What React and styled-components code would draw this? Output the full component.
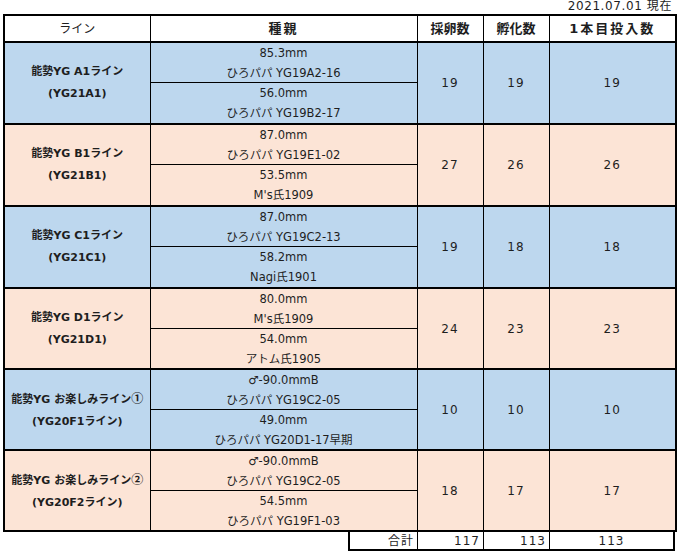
import React from "react";
import styled, { createGlobalStyle } from "styled-components";

const GlobalStyle = createGlobalStyle`
  body {
    margin: 0;
    background: #fff;
  }
`;

const tones = {
  blue: "#bdd7ee",
  peach: "#fce4d6",
};

const Page = styled.div`
  width: 672px;
  padding-left: 3px;
  font-family: "DejaVu Sans", "Noto Sans CJK JP", sans-serif;
  color: #1e1e1e;
`;

const DateLine = styled.div`
  height: 14px;
  line-height: 13px;
  font-size: 12px;
  letter-spacing: 0.6px;
  text-align: right;
  padding-right: 3px;
  box-sizing: border-box;
`;

const Table = styled.table`
  width: 672px;
  border-collapse: collapse;
  table-layout: fixed;
  border: 2px solid #000;
`;

const HeadCell = styled.th`
  height: 25px;
  padding: 0;
  border: 1px solid #000;
  border-bottom: 2px solid #000;
  background: #fff;
  font-size: ${(p) => (p.$bold ? "13px" : "12px")};
  font-weight: ${(p) => (p.$bold ? 700 : 400)};
  line-height: 16px;
  letter-spacing: ${(p) => p.$spacing || "0"};
  text-align: center;
`;

const GroupRow = styled.tr`
  border-top: ${(p) => (p.$start ? "2px solid #000" : "none")};
`;

const NameCell = styled.td`
  padding: 0;
  border-right: 1px solid #000;
  background: ${(p) => tones[p.$tone]};
  font-size: 11px;
  font-weight: 700;
  line-height: 22px;
  text-align: center;
`;

const Circled = styled.span`
  font-family: "Noto Sans CJK JP", sans-serif;
  font-size: 12px;
  font-weight: 700;
`;

const ParentCell = styled.td`
  height: ${(p) => p.$h}px;
  padding: 0;
  background: ${(p) => tones[p.$tone]};
  border-bottom: ${(p) => (p.$split ? "1px solid #000" : "none")};
  font-size: 11.5px;
  line-height: 14px;
  text-align: center;
  white-space: nowrap;
`;

const CountCell = styled.td`
  padding: 0;
  border-left: 1px solid #000;
  background: ${(p) => tones[p.$tone]};
  font-size: 12px;
  letter-spacing: 1px;
  text-align: center;
`;

const TotalRow = styled.div`
  display: flex;
  margin-left: 345px;
  height: 19px;
`;

const TotalCell = styled.div`
  width: ${(p) => p.$w}px;
  box-sizing: border-box;
  border: 1px solid #000;
  border-top: none;
  border-left: ${(p) => (p.$first ? "2px" : "0")} solid #000;
  border-right-width: ${(p) => (p.$last ? "2px" : "1px")};
  border-bottom-width: 2px;
  padding: 0 3px;
  font-size: 12px;
  letter-spacing: 1px;
  line-height: 18px;
  text-align: ${(p) => p.$align || "right"};
`;

const groups = [
  {
    name: "能勢YG A1ライン",
    code: "(YG21A1)",
    tone: "blue",
    parents: [
      ["85.3mm", "ひろパパ YG19A2-16"],
      ["56.0mm", "ひろパパ YG19B2-17"],
    ],
    counts: [19, 19, 19],
  },
  {
    name: "能勢YG B1ライン",
    code: "(YG21B1)",
    tone: "peach",
    parents: [
      ["87.0mm", "ひろパパ YG19E1-02"],
      ["53.5mm", "M's氏1909"],
    ],
    counts: [27, 26, 26],
  },
  {
    name: "能勢YG C1ライン",
    code: "(YG21C1)",
    tone: "blue",
    parents: [
      ["87.0mm", "ひろパパ YG19C2-13"],
      ["58.2mm", "Nagi氏1901"],
    ],
    counts: [19, 18, 18],
  },
  {
    name: "能勢YG D1ライン",
    code: "(YG21D1)",
    tone: "peach",
    parents: [
      ["80.0mm", "M's氏1909"],
      ["54.0mm", "アトム氏1905"],
    ],
    counts: [24, 23, 23],
  },
  {
    name: "能勢YG お楽しみライン",
    mark: "①",
    code: "(YG20F1ライン)",
    tone: "blue",
    parents: [
      ["♂-90.0mmB", "ひろパパ YG19C2-05"],
      ["49.0mm", "ひろパパ YG20D1-17早期"],
    ],
    counts: [10, 10, 10],
  },
  {
    name: "能勢YG お楽しみライン",
    mark: "②",
    code: "(YG20F2ライン)",
    tone: "peach",
    parents: [
      ["♂-90.0mmB", "ひろパパ YG19C2-05"],
      ["54.5mm", "ひろパパ YG19F1-03"],
    ],
    counts: [18, 17, 17],
  },
];

function Group({ group, tall }) {
  const [top, bottom] = group.parents;
  return (
    <>
      <GroupRow $start>
        <NameCell rowSpan={4} $tone={group.tone}>
          {group.name}
          {group.mark && <Circled>{group.mark}</Circled>}
          <br />
          {group.code}
        </NameCell>
        <ParentCell $tone={group.tone} $h={20}>
          {top[0]}
        </ParentCell>
        {group.counts.map((c, i) => (
          <CountCell key={i} rowSpan={4} $tone={group.tone}>
            {c}
          </CountCell>
        ))}
      </GroupRow>
      <GroupRow>
        <ParentCell $tone={group.tone} $h={19} $split>
          {top[1]}
        </ParentCell>
      </GroupRow>
      <GroupRow>
        <ParentCell $tone={group.tone} $h={20}>
          {bottom[0]}
        </ParentCell>
      </GroupRow>
      <GroupRow>
        <ParentCell $tone={group.tone} $h={tall ? 20 : 19}>
          {bottom[1]}
        </ParentCell>
      </GroupRow>
    </>
  );
}

export default function App() {
  return (
    <Page>
      <GlobalStyle />
      <DateLine>2021.07.01 現在</DateLine>
      <Table>
        <colgroup>
          <col style={{ width: 146 }} />
          <col style={{ width: 267 }} />
          <col style={{ width: 66 }} />
          <col style={{ width: 66 }} />
          <col style={{ width: 127 }} />
        </colgroup>
        <thead>
          <tr>
            <HeadCell>ライン</HeadCell>
            <HeadCell $bold $spacing="2px">種親</HeadCell>
            <HeadCell $bold>採卵数</HeadCell>
            <HeadCell $bold>孵化数</HeadCell>
            <HeadCell $bold $spacing="2px">1本目投入数</HeadCell>
          </tr>
        </thead>
        <tbody>
          {groups.map((g, i) => (
            <Group key={g.code} group={g} tall={i < 3} />
          ))}
        </tbody>
      </Table>
      <TotalRow>
        <TotalCell $w={70} $first>合計</TotalCell>
        <TotalCell $w={66}>117</TotalCell>
        <TotalCell $w={66}>113</TotalCell>
        <TotalCell $w={125} $last $align="center">
          113
        </TotalCell>
      </TotalRow>
    </Page>
  );
}
